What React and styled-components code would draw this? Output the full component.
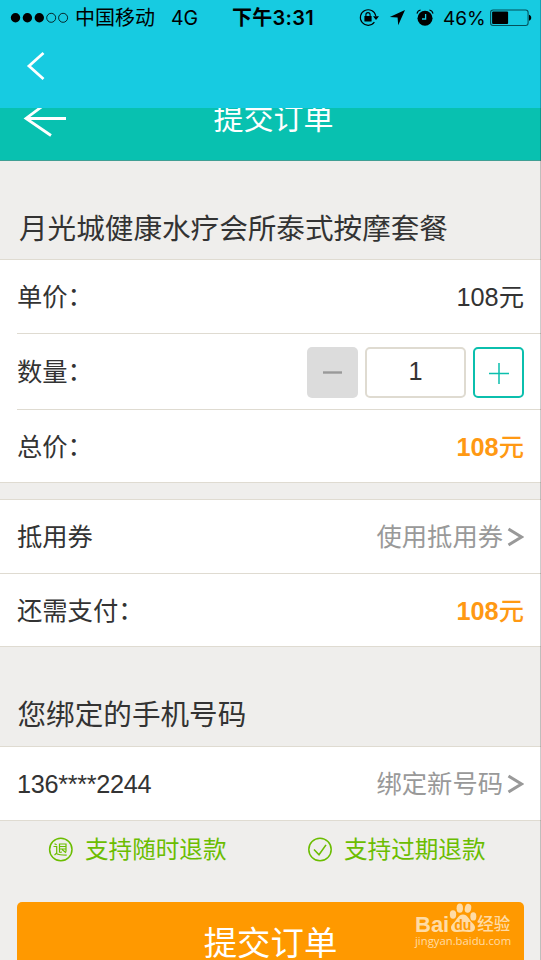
import React from "react";
import styled, { createGlobalStyle, css } from "styled-components";

const GlobalStyle = createGlobalStyle`
  * { box-sizing: border-box; }
  html, body { margin: 0; padding: 0; }
  body {
    background: #efeeec;
    font-family: "Liberation Sans", "Noto Sans CJK SC", sans-serif;
    color: #333;
    overflow: hidden;
  }
`;

const Screen = styled.main`
  position: relative;
  width: 541px;
  height: 960px;
  overflow: hidden;
  display: flex;
  flex-direction: column;
  background: #efeeec;
  &::after {
    content: "";
    position: absolute;
    inset: 0 0 0 auto;
    width: 1px;
    background: rgba(0, 0, 0, 0.2);
  }
`;

const TopBar = styled.header`
  flex: none;
  height: 108px;
  background: #17cbe1;
`;

const StatusBar = styled.div`
  display: flex;
  align-items: center;
  height: 35px;
  padding-left: 10px;
  font-family: Inter, "Noto Sans CJK SC", sans-serif;
  font-size: 20px;
  line-height: 33px;
  color: #000;
  white-space: nowrap;
  svg { flex: none; display: block; }
`;

const Carrier = styled.span`
  width: 96px;
  margin-left: 6px;
  padding-top: 2px;
`;

const Network = styled.span`
  width: 61px;
  padding-top: 1px;
  font-size: 19.5px;
`;

const Clock = styled.span`
  width: 127px;
  padding-top: 1px;
  font-weight: 600;
  font-size: 20px;
  letter-spacing: 0.3px;
`;

const Percent = styled.span`
  width: 47px;
  margin-left: 9px;
  padding-top: 1px;
  font-size: 19px;
`;

const StatusIcons = styled.div`
  display: flex;
  align-items: center;
  gap: 10px;
`;

const NavBar = styled.nav`
  display: flex;
  padding: 16px 0 0 26px;
`;

const PageHeader = styled.div`
  flex: none;
  height: 53px;
  overflow: hidden;
  display: grid;
  grid-template-columns: 90px 1fr 84px;
  background: #08c1b0;
  border-bottom: 1px solid #3f9f94;
  color: #fff;
`;

const PageTitle = styled.h1`
  margin: -11px 0 0;
  font-size: 30px;
  line-height: 44px;
  font-weight: 400;
  text-align: center;
`;

const SectionTitle = styled.h2`
  flex: none;
  margin: 0;
  height: ${(p) => p.$height}px;
  padding: ${(p) => p.$top}px 0 0 ${(p) => p.$left}px;
  font-size: 28.6px;
  line-height: 40px;
  font-weight: 400;
  white-space: nowrap;
`;

const Panel = styled.section`
  flex: none;
  margin-bottom: ${(p) => p.$gap || 0}px;
  background: #fff;
  border: solid #dfdbd1;
  border-width: 1px 0;
`;

const Row = styled.div`
  display: flex;
  align-items: center;
  justify-content: space-between;
  height: ${(p) => p.$height || 73}px;
  margin-left: ${(p) => (p.$inset ? 17 : 0)}px;
  padding: ${(p) => p.$drop || 0}px 17px 0 ${(p) => (p.$inset ? 0 : 17)}px;
  border-bottom: ${(p) => (p.$divided ? "1px solid #dfdbd1" : "none")};
  font-size: 25.3px;
  line-height: 36px;
`;

const Colon = styled.span`
  line-height: 0;
  vertical-align: 1px;
`;

const Phone = styled.span`
  letter-spacing: -0.32px;
`;

const Price = styled.span`
  ${(p) =>
    p.$strong &&
    css`
      color: #ff9913;
      font-weight: 700;
    `}
`;

const Unit = styled.span`
  font-weight: ${(p) => (p.$strong ? 500 : 400)};
`;

const LinkText = styled.a`
  display: flex;
  align-items: center;
  gap: 4px;
  color: #999;
`;

const Stepper = styled.div`
  display: grid;
  grid-template-columns: 51px 101px 51px;
  gap: 7px;
  height: 51px;
  margin-top: 2px;
`;

const StepButton = styled.button`
  display: grid;
  place-items: center;
  padding: 0;
  border-radius: 5px;
  border: ${(p) => (p.$muted ? "none" : "2px solid #0bbfad")};
  background: ${(p) => (p.$muted ? "#dcdcdc" : "#fff")};
  color: ${(p) => (p.$muted ? "#999" : "#0bbfad")};
`;

const Quantity = styled.output`
  border: 2px solid #dfdbd1;
  border-radius: 5px;
  text-align: center;
  line-height: 45px;
`;

const Guarantees = styled.div`
  flex: none;
  display: grid;
  grid-template-columns: 259px 1fr;
  height: 81px;
  padding: 10px 0 0 48px;
`;

const Guarantee = styled.div`
  display: flex;
  align-items: center;
  gap: 12px;
  height: 36px;
  font-size: 23.6px;
  line-height: 36px;
  color: #6bbd00;
  white-space: nowrap;
`;

const GuaranteeLabel = styled.span`
  padding-top: 2px;
`;

const Submit = styled.button`
  flex: none;
  height: 76px;
  margin: 0 17px;
  padding: 7px 0 0;
  border: 0;
  border-radius: 5px;
  background: #ff9900;
  color: #fff;
  font-family: inherit;
  font-size: 33.4px;
  line-height: 48px;
`;

const Watermark = styled.div`
  position: absolute;
  left: 415px;
  top: 902px;
  width: 98px;
  color: #ffdca6;
`;

const Brand = styled.div`
  display: flex;
  align-items: flex-end;
  height: 31px;
  font-weight: 700;
  font-size: 22px;
  line-height: 16px;
  white-space: nowrap;
  svg { flex: none; }
`;

const BrandSuffix = styled.span`
  font-size: 16.5px;
  line-height: 17px;
  font-weight: 500;
`;

const Site = styled.div`
  font-family: "Open Sans", sans-serif;
  font-weight: 500;
  font-size: 11.3px;
  line-height: 15px;
  white-space: nowrap;
`;

const SignalDots = () => (
  <svg width="59" height="12" viewBox="0 0 59 12">
    {[5.5, 17.4, 29.3].map((x) => (
      <circle key={x} cx={x} cy="5.8" r="4.7" />
    ))}
    {[41.2, 53.1].map((x) => (
      <circle key={x} cx={x} cy="5.8" r="4.5" fill="none" stroke="#000" strokeWidth="0.8" />
    ))}
  </svg>
);

const RotationLock = () => (
  <svg width="20" height="20" viewBox="0 0 20 20">
    <path d="M15.4 14.2A7.8 7.8 0 1 1 16.8 8" fill="none" stroke="#000" strokeWidth="1.1" />
    <path d="M14 8.3h6l-3 3.6z" />
    <rect x="5.4" y="8" width="7.2" height="5.4" rx="0.5" />
    <path d="M6.9 8.500V6.7a2.1 2.1 0 0 1 4.2 0v1.800" fill="none" stroke="#000" strokeWidth="1.1" />
  </svg>
);

const LocationArrow = () => (
  <svg width="17" height="17" viewBox="0 0 17 17">
    <path d="M16 1 9.2 16.2 8.6 8.6.8 8z" />
  </svg>
);

const Alarm = () => (
  <svg width="18" height="18" viewBox="0 0 18 18">
    <circle cx="9" cy="9.3" r="7.5" />
    <path d="M9.6 5v5H6" fill="none" stroke="#17cbe1" strokeWidth="1.3" />
    <path d="M1 4.600C1.400 2.600 2.800 1.300 4.600 1M13.400 1c1.800.3 3.200 1.600 3.600 3.600" fill="none" stroke="#000" strokeWidth="1.1" />
  </svg>
);

const Battery = () => (
  <svg width="43" height="18" viewBox="0 0 43 18">
    <rect x="0.6" y="1" width="37.5" height="15.5" rx="2.5" fill="none" stroke="#03515b" strokeWidth="1.1" />
    <rect x="2.1" y="2.5" width="16" height="12.5" rx="1" />
    <path d="M39 5.800c3 1 3 5 0 6z" />
  </svg>
);

const Forward = () => (
  <svg width="17" height="20" viewBox="0 0 17 20">
    <path d="M1.5 2 14.5 10 1.5 18" fill="none" stroke="#999" strokeWidth="3" />
  </svg>
);

const RefundBadge = () => (
  <svg width="25" height="25" viewBox="0 0 25 25" fill="none" stroke="#6bbd00">
    <circle cx="12.8" cy="12.5" r="11.2" strokeWidth="1.5" />
    <path d="M6.500 6.800l2.200 1M5.500 9.500h3.200v6.500L6.500 18.200M8.700 16.800c2 1.300 5 1.300 10 1.300M11.500 15.500V7h6.500v5h-6.500M11.500 9.500H18M11.500 15.500l2.500-.5M14 12.500l4 3.200M18 12.500v2.200" strokeWidth="1.2" />
  </svg>
);

const CheckBadge = () => (
  <svg width="25" height="25" viewBox="0 0 25 25" fill="none" stroke="#6bbd00">
    <circle cx="13" cy="12.5" r="11.2" strokeWidth="1.5" />
    <path d="M7 12.500l5 5.2 7-9.8" strokeWidth="1.6" />
  </svg>
);

const Paw = () => (
  <svg width="28" height="30" viewBox="0 0 28 30" fill="currentColor">
    <ellipse cx="4" cy="11.500" rx="3.2" ry="4.2" />
    <ellipse cx="10.800" cy="5.2" rx="3.2" ry="4.6" />
    <ellipse cx="19" cy="5.3" rx="3.2" ry="4.5" transform="rotate(12 19 5.3)" />
    <ellipse cx="24.300" cy="13.400" rx="3" ry="4.2" />
    <path d="M14 11.500c4.500 0 6 5 9.500 8.500 5 4.500 2 10-4 9-4-.7-7-.7-11 0-6 1-9-4.500-4-9C8 16.500 9.500 11.500 14 11.500z" />
    <text x="13.7" y="26.5" textAnchor="middle" fontFamily="Liberation Sans" fontWeight="700" fontSize="14" fill="#ff9900">du</text>
  </svg>
);

const Label = ({ children }) => (
  <span>
    {children}
    <Colon>：</Colon>
  </span>
);

const Amount = ({ value, strong }) => (
  <Price $strong={strong}>
    {value}
    <Unit $strong={strong}>元</Unit>
  </Price>
);

export default function App() {
  return (
    <>
      <GlobalStyle />
      <Screen>
        <TopBar>
          <StatusBar>
            <SignalDots />
            <Carrier>中国移动</Carrier>
            <Network>4G</Network>
            <Clock>下午3:31</Clock>
            <StatusIcons>
              <RotationLock />
              <LocationArrow />
              <Alarm />
            </StatusIcons>
            <Percent>46%</Percent>
            <Battery />
          </StatusBar>
          <NavBar>
            <svg width="20" height="30" viewBox="0 0 20 30">
              <path d="M17.5 2 3 15 17.5 28" fill="none" stroke="#fff" strokeWidth="2.8" />
            </svg>
          </NavBar>
        </TopBar>

        <PageHeader>
          <svg width="90" height="40" viewBox="0 0 90 40">
            <path d="M52 -9 26 10.500 51 27.500M26 10.500H66" fill="none" stroke="#fff" strokeWidth="2.8" />
          </svg>
          <PageTitle>提交订单</PageTitle>
        </PageHeader>

        <SectionTitle $height={98} $top={48} $left={19}>月光城健康水疗会所泰式按摩套餐</SectionTitle>
        <Panel $gap={16}>
          <Row $inset $divided $height={74} $drop={1}>
            <Label>单价</Label>
            <Amount value="108" />
          </Row>
          <Row $inset $divided $height={76}>
            <Label>数量</Label>
            <Stepper>
              <StepButton $muted aria-label="减少">
                <svg width="19" height="4" viewBox="0 0 19 4">
                  <path d="M0 1.500h19" stroke="currentColor" strokeWidth="2.4" />
                </svg>
              </StepButton>
              <Quantity>1</Quantity>
              <StepButton aria-label="增加">
                <svg width="20" height="22" viewBox="0 0 20 22">
                  <path d="M0 11.500h20M10 1v21" stroke="currentColor" strokeWidth="1.5" />
                </svg>
              </StepButton>
            </Stepper>
          </Row>
          <Row $inset $height={72} $drop={2}>
            <Label>总价</Label>
            <Amount value="108" strong />
          </Row>
        </Panel>

        <Panel>
          <Row $divided $height={74} $drop={1}>
            <span>抵用券</span>
            <LinkText>使用抵用券<Forward /></LinkText>
          </Row>
          <Row $height={72} $drop={2}>
            <Label>还需支付</Label>
            <Amount value="108" strong />
          </Row>
        </Panel>

        <SectionTitle $height={99} $top={48} $left={17.5}>您绑定的手机号码</SectionTitle>
        <Panel>
          <Row $height={73}>
            <Phone>136****2244</Phone>
            <LinkText>绑定新号码<Forward /></LinkText>
          </Row>
        </Panel>

        <Guarantees>
          <Guarantee><RefundBadge /><GuaranteeLabel>支持随时退款</GuaranteeLabel></Guarantee>
          <Guarantee><CheckBadge /><GuaranteeLabel>支持过期退款</GuaranteeLabel></Guarantee>
        </Guarantees>
        <Submit>提交订单</Submit>

        <Watermark>
          <Brand>
            Bai<Paw />
            <BrandSuffix>经验</BrandSuffix>
          </Brand>
          <Site>jingyan.baidu.com</Site>
        </Watermark>
      </Screen>
    </>
  );
}
